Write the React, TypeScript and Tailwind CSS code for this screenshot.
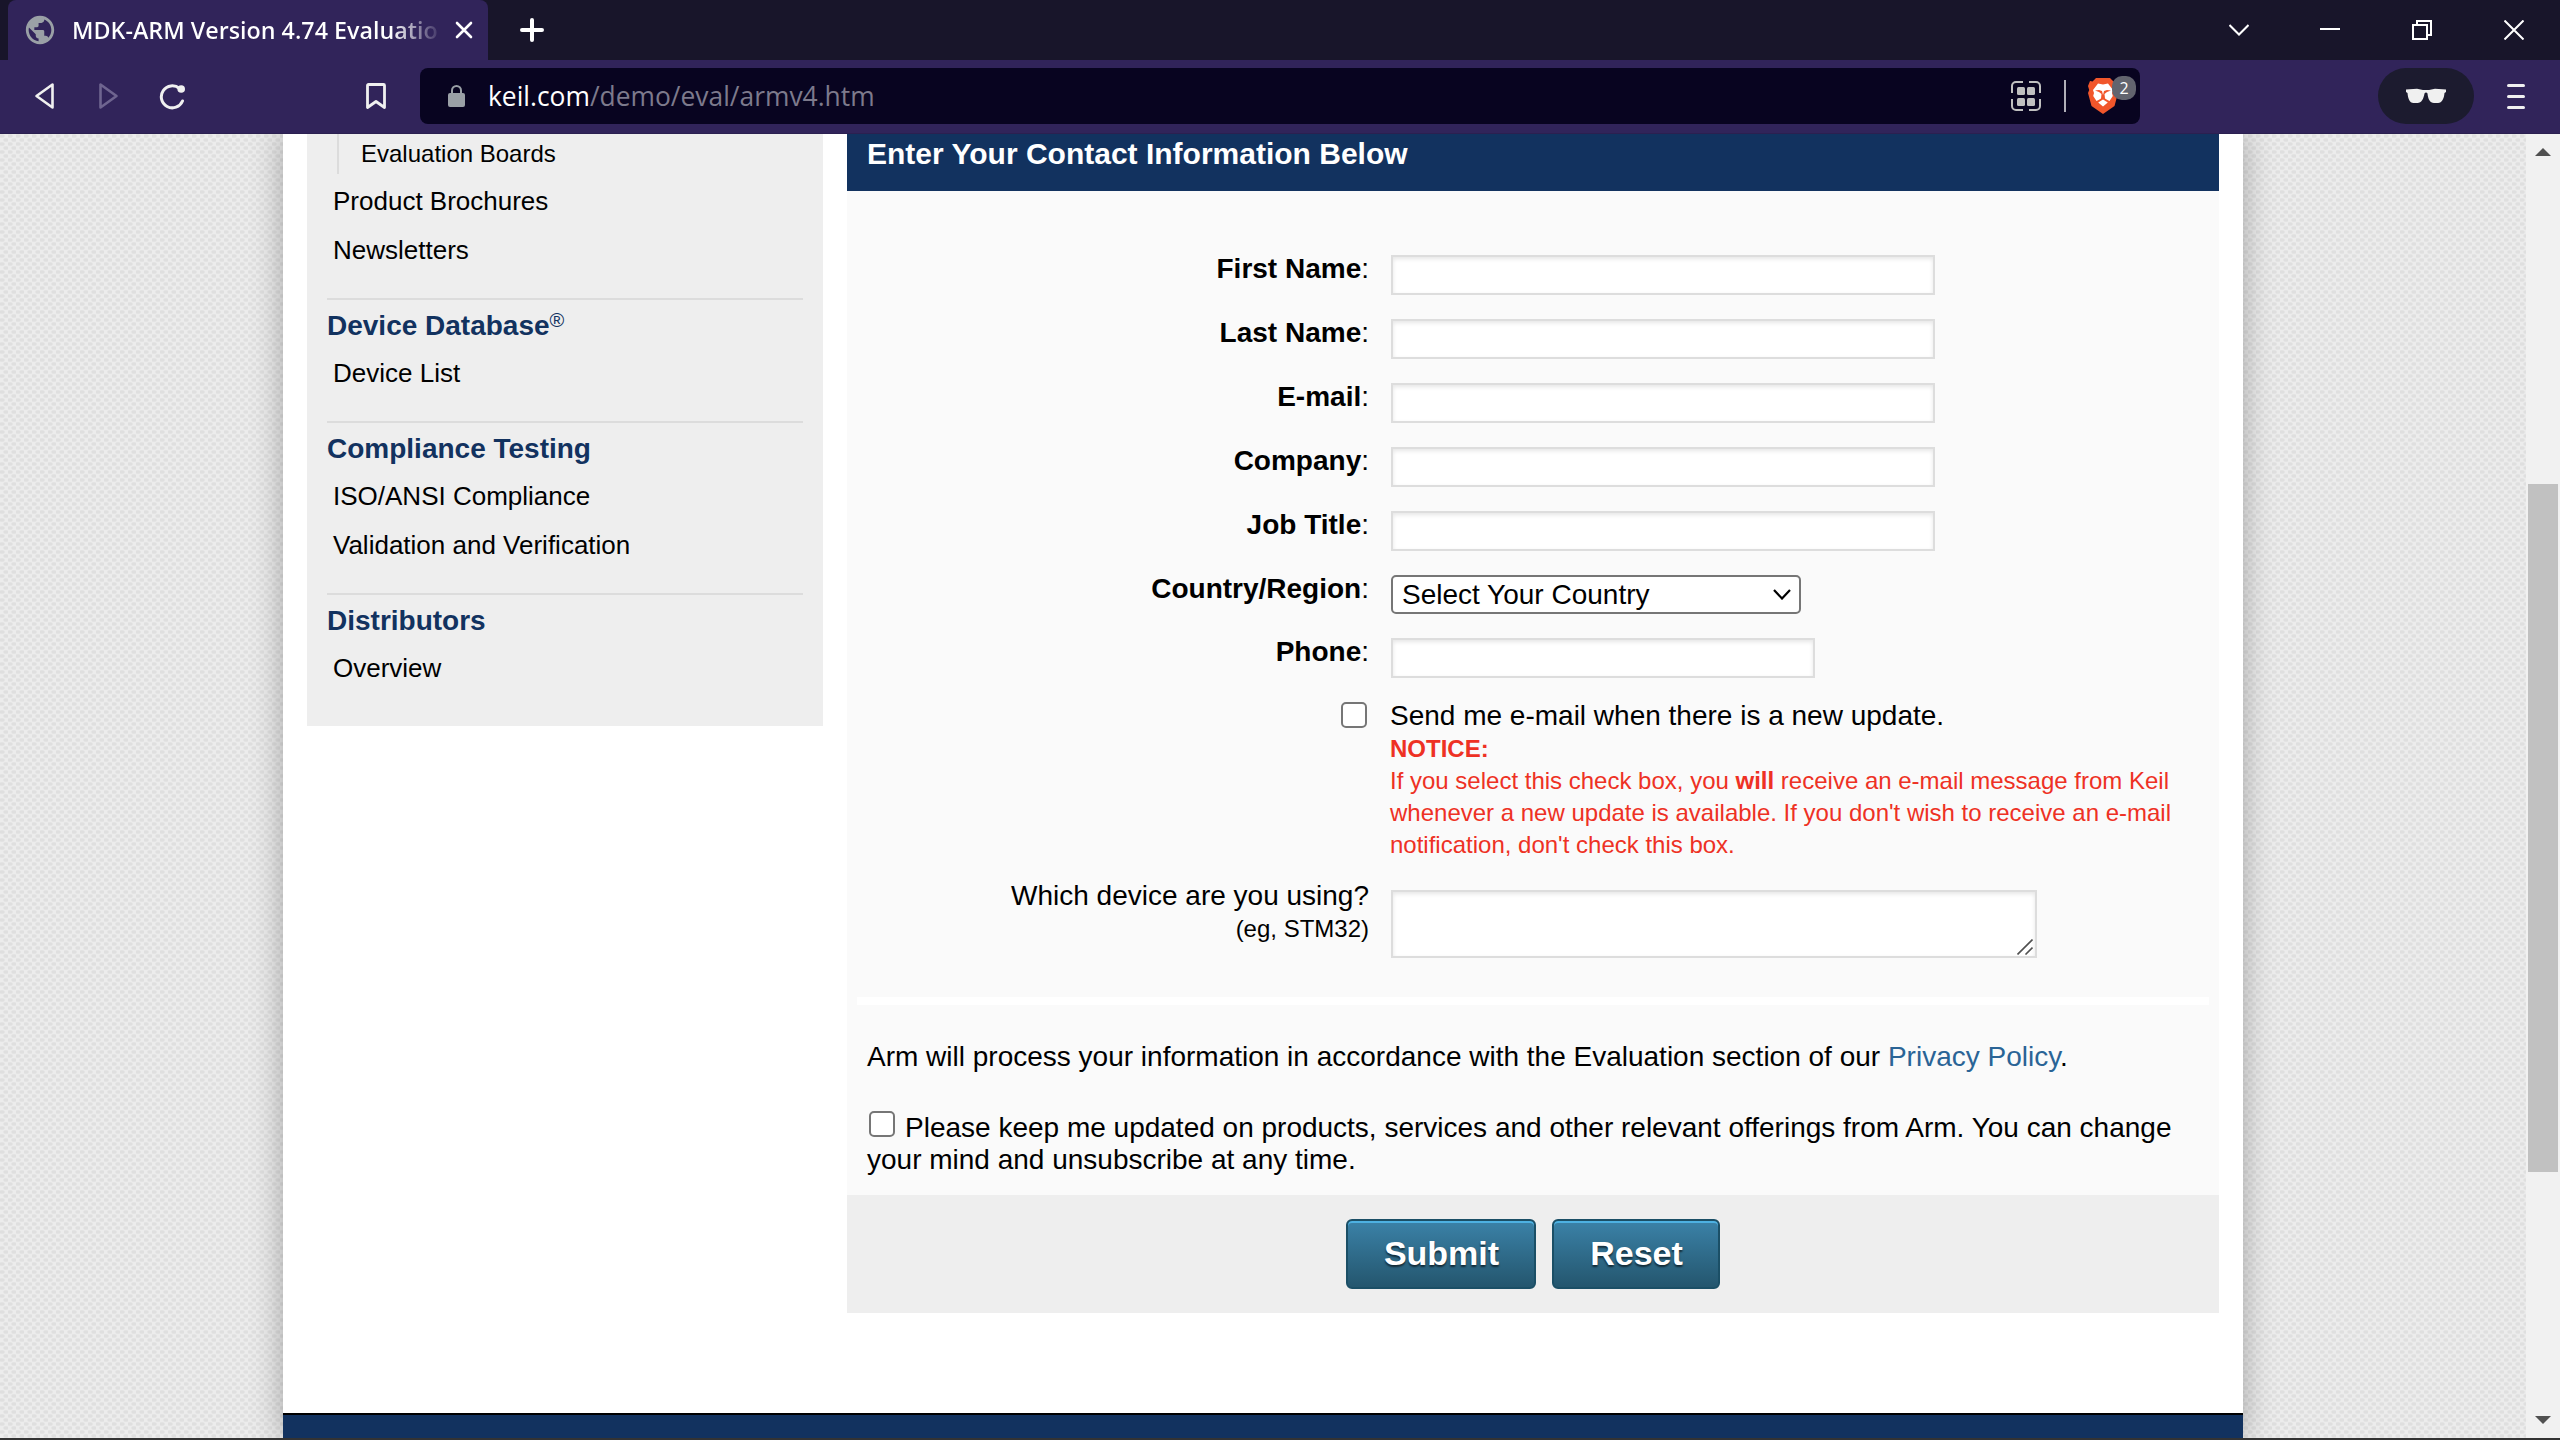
import type { ReactNode } from "react";
import { MdPublic } from "react-icons/md";

const stroke = { fill: "none", stroke: "currentColor" } as const;

function TabStrip() {
  return (
    <div className="flex h-[60px] items-stretch bg-[#18152a] text-white">
      <div className="ml-2 flex w-[480px] items-center rounded-t-lg bg-[#31245a]">
        <MdPublic className="ml-[15px] h-[34px] w-[34px] shrink-0 text-[#9aa0a6]" />
        <div className="ml-[15px] w-[371px] overflow-hidden whitespace-nowrap bg-gradient-to-r from-white from-86% to-transparent bg-clip-text font-['Open_Sans','Noto_Sans',sans-serif] text-[23.3px] font-semibold text-transparent">
          MDK-ARM Version 4.74 Evaluatio
        </div>
        <svg className="ml-[12px] h-[18px] w-[18px] shrink-0" viewBox="0 0 18 18" {...stroke} strokeWidth="2.6" strokeLinecap="round">
          <path d="M2 2 16 16M16 2 2 16" />
        </svg>
      </div>
      <svg className="my-auto ml-8 h-6 w-6" viewBox="0 0 24 24" {...stroke} strokeWidth="4" strokeLinecap="round">
        <path d="M12 2v20M2 12h20" />
      </svg>
      <div className="ml-auto flex items-center gap-[72px] pr-[36px]">
        <svg className="-mr-px h-5 w-5" viewBox="0 0 20 20" {...stroke} strokeWidth="2">
          <path d="M0.5 5 10 14.500l9.500-9.500" />
        </svg>
        <svg className="h-5 w-5" viewBox="0 0 20 20" {...stroke} strokeWidth="2">
          <path d="M0 9h20" />
        </svg>
        <svg className="h-5 w-5" viewBox="0 0 20 20" {...stroke} strokeWidth="2">
          <path d="M1 5h14v14H1zM5 4.500V1h14v14h-3.500" />
        </svg>
        <svg className="h-5 w-5" viewBox="0 0 20 20" {...stroke} strokeWidth="2">
          <path d="M0.500 0.500 19.500 19.500M19.500 0.500 0.500 19.500" />
        </svg>
      </div>
    </div>
  );
}

function BraveIcon() {
  return (
    <svg className="h-9 w-[30px]" viewBox="0 0 30 36">
      <path fill="#f1562b" d="M8 0h14l3.500 3.500 2.500-.5 2 5-1.200 4L30 15l-3.500 13L15 36 3.500 28 0 15l1.200-3L0 8l2-5 2.500.5z" />
      <path
        fill="#fff"
        d="M10 5.500l5 1 5-1 5 6.500-1 3 .800 3-3.300 5-2.500-1.300-2-1.200-.5-4.500 2.500-2 4-1.500-4-.5-3 1L15 17l-1-4-3-1-4 .5 4 1.500 2.500 2-.5 4.500-2 1.200L8.500 23l-3.300-5 .8-3-1-3z"
      />
      <path fill="#fff" d="M15 21.500l4.800 3L15 28.500l-4.800-4z" />
    </svg>
  );
}

function Toolbar() {
  return (
    <div className="flex h-[74px] items-start border-b border-[#2b2050] bg-[#31245a] pt-2 text-[#f0f0f0]">
      <div className="flex h-14 w-[420px] shrink-0 items-center">
        <svg className="ml-[34px] h-[28px] w-[21px]" viewBox="0 0 21 28" {...stroke} strokeWidth="2.600" strokeLinejoin="round">
          <path d="M18.500 2.500v23L2.500 14z" />
        </svg>
        <svg className="ml-[43px] h-[28px] w-[21px] text-[#6f6590]" viewBox="0 0 21 28" {...stroke} strokeWidth="2.600" strokeLinejoin="round">
          <path d="M2.500 2.500v23L18.500 14z" />
        </svg>
        <svg className="ml-[38px] h-[28px] w-[30px]" viewBox="0 0 30 28" {...stroke} strokeWidth="3" strokeLinecap="round">
          <path d="M22.500 6.500A11 11 0 1 0 25.500 19" />
          <circle cx="24.200" cy="7" r="3.800" fill="currentColor" stroke="none" />
        </svg>
        <svg className="ml-[178px] h-[28px] w-[22px]" viewBox="0 0 22 28" {...stroke} strokeWidth="2.800" strokeLinejoin="round">
          <path d="M2.500 3.500a1 1 0 0 1 1-1h15a1 1 0 0 1 1 1v22L11 19.500 2.500 25.500z" />
        </svg>
      </div>
      <div className="flex h-14 w-[1720px] items-center rounded-lg bg-[#080420]">
        <svg className="ml-[28px] h-[22px] w-[17px]" viewBox="0 0 17 22">
          <rect y="8" width="17" height="14" rx="2" fill="#9aa0a6" />
          <path d="M4 9V5.500a4.500 4.500 0 0 1 9 0V9" fill="none" stroke="#9aa0a6" strokeWidth="2" />
        </svg>
        <div className="ml-[23px] whitespace-nowrap font-['Open_Sans','Noto_Sans',sans-serif] text-[26.4px] leading-8 text-[#7d7a8c]">
          <span className="text-white">keil.com</span>/demo/eval/armv4.htm
        </div>
        <svg className="ml-auto h-[30px] w-[30px] text-[#c0c0c0]" viewBox="0 0 30 30">
          <path {...stroke} strokeWidth="2" d="M1 12V5a4 4 0 0 1 4-4h7M18 1h7a4 4 0 0 1 4 4v7M29 18v7a4 4 0 0 1-4 4h-7M12 29H5a4 4 0 0 1-4-4v-7" />
          <g fill="currentColor">
            <rect x="6" y="6" width="8" height="8" rx="1.500" />
            <rect x="16" y="6" width="8" height="8" rx="1.500" />
            <rect x="6" y="17" width="8" height="8" rx="1.500" />
            <rect x="16" y="17" width="8" height="8" rx="1.500" />
          </g>
        </svg>
        <div className="ml-[23px] h-8 w-[2px] bg-[#b0afb8]" />
        <div className="relative mr-[22px] ml-[22px]">
          <BraveIcon />
          <div className="absolute -top-[2px] left-6 flex h-6 w-6 items-center justify-center rounded-[10px] bg-[#62646e] font-['Open_Sans',sans-serif] text-[16px] leading-none text-white">
            2
          </div>
        </div>
      </div>
      <div className="ml-auto flex h-14 items-center">
        <div className="flex h-14 w-24 items-center justify-center rounded-full bg-[#1c1b2f]">
          <svg className="h-4 w-10" viewBox="0 0 40 16" fill="#f0f0f0">
            <path d="M0 1.500 11 .8l6 1.200h6l6-1.200 11 .7v2.500l-1.500 1c-.5 5.500-2.500 10-6.500 10h-4c-4 0-6-4-6.500-9.500-.8-1.300-2.200-1.300-3 0C17.500 11 15.500 15 11.500 15h-4C3.500 15 2 10.500 1.500 5L0 4z" />
          </svg>
        </div>
        <div className="mr-[35px] ml-[33px] flex w-[18px] flex-col gap-2">
          <div className="h-[3px] rounded-full bg-[#f0f0f0]" />
          <div className="h-[3px] rounded-full bg-[#f0f0f0]" />
          <div className="h-[3px] rounded-full bg-[#f0f0f0]" />
        </div>
      </div>
    </div>
  );
}

function SideSection({ title, items }: { title: ReactNode; items: string[] }) {
  return (
    <section className="border-t-2 border-[#dcdcdc] pt-[10px] pb-[15px]">
      <h3 className="h-[47px] text-[28px] leading-8 font-bold text-[#12325f]">{title}</h3>
      <ul className="ml-[6px] text-[26px]">
        {items.map((item) => (
          <li key={item} className="h-[49px] leading-8">
            {item}
          </li>
        ))}
      </ul>
    </section>
  );
}

function Sidebar() {
  return (
    <nav className="ml-6 h-[592px] w-[516px] bg-[#eeeeee] px-5">
      <div className="ml-[10px] h-10 border-l-2 border-[#dcdcdc] pt-1 pl-[22px] text-[24px] leading-8">Evaluation Boards</div>
      <ul className="mt-[11px] mb-[15px] ml-[6px] h-[98px] text-[26px] leading-8">
        <li className="h-[49px]">Product Brochures</li>
        <li className="h-[49px]">Newsletters</li>
      </ul>
      <SideSection
        title={
          <>
            Device Database<sup className="-top-[8px] text-[20px] leading-none font-normal">®</sup>
          </>
        }
        items={["Device List"]}
      />
      <SideSection title="Compliance Testing" items={["ISO/ANSI Compliance", "Validation and Verification"]} />
      <SideSection title="Distributors" items={["Overview"]} />
    </nav>
  );
}

const field = "block rounded-none border-2 border-[#dddddd] bg-white shadow-[inset_0_2px_4px_rgba(0,0,0,0.1)] outline-none";
const checkbox = "h-[26px] w-[26px] appearance-none rounded-[5px] border-2 border-[#767676] bg-white";

function Row({ label, className, children }: { label: ReactNode; className: string; children: ReactNode }) {
  return (
    <div className={"flex " + className}>
      <div className="mr-[22px] w-[522px] shrink-0 pt-px text-right">{label}</div>
      <div className="pt-[3px]">{children}</div>
    </div>
  );
}

function FieldLabel({ children }: { children: string }) {
  return (
    <>
      <b>{children}</b>:
    </>
  );
}

function ContactForm() {
  return (
    <form className="ml-6 w-[1372px] text-[28px] leading-8">
      <h2 className="h-[57px] bg-[#12325f] pt-[4px] pl-5 text-[30px] leading-8 font-bold text-white">
        Enter Your Contact Information Below
      </h2>
      <div className="h-[1004px] bg-[#fafafa] pt-[61px]">
        {["First Name", "Last Name", "E-mail", "Company", "Job Title"].map((name) => (
          <Row key={name} className="h-16" label={<FieldLabel>{name}</FieldLabel>}>
            <input className={field + " h-10 w-[544px]"} />
          </Row>
        ))}
        <Row className="h-[63px]" label={<FieldLabel>Country/Region</FieldLabel>}>
          <div className="relative">
            <select className="block h-[39px] w-[410px] appearance-none rounded-[5px] border-2 border-[#767676] bg-white py-0 pl-[9px] leading-8 text-black">
              <option>Select Your Country</option>
            </select>
            <svg className="absolute top-[14px] right-[10px] h-[11px] w-[18px]" viewBox="0 0 18 11" fill="none" stroke="#000" strokeWidth="2.200">
              <path d="M1 1l8 8.500L17 1" />
            </svg>
          </div>
        </Row>
        <Row className="h-16" label={<FieldLabel>Phone</FieldLabel>}>
          <input className={field + " h-10 w-[424px]"} />
        </Row>
        <Row className="h-[180px]" label={<input type="checkbox" className={checkbox + " mt-[2px] mr-[2px]"} />}>
          <div className="-mt-[3px] -ml-px w-[800px]">
            <div className="h-[34px] pt-px">Send me e-mail when there is a new update.</div>
            <div className="text-[24px] leading-8 text-[#ee3124]">
              <b>NOTICE:</b>
              <br />
              If you select this check box, you <b>will</b> receive an e-mail message from Keil
              <br />
              whenever a new update is available. If you don't wish to receive an e-mail
              <br />
              notification, don't check this box.
            </div>
          </div>
        </Row>
        <Row
          className="h-[118px]"
          label={
            <>
              <div className="h-[33px]">Which device are you using?</div>
              <div className="text-[24px] leading-8">(eg, STM32)</div>
            </>
          }
        >
          <div className="relative mt-2">
            <textarea className={field + " h-[68px] w-[646px] resize-none"} />
            <svg className="absolute right-[4px] bottom-[3px] h-4 w-4" viewBox="0 0 16 16" fill="none" stroke="#505050" strokeWidth="1.600">
              <path d="M0.500 15.500 15.500 .5M8.500 15.500 15.500 8.500" />
            </svg>
          </div>
        </Row>
        <div className="mx-[10px] h-2 bg-white" />
        <p className="mt-[36px] pl-5">
          Arm will process your information in accordance with the Evaluation section of our{" "}
          <a className="text-[#2a6496]">Privacy Policy</a>.
        </p>
        <p className="mt-[38px] pl-5 whitespace-nowrap">
          <input type="checkbox" className={checkbox + " mr-[10px] ml-[2px] align-[0px]"} />
          Please keep me updated on products, services and other relevant offerings from Arm. You can change
          <br />
          your mind and unsubscribe at any time.
        </p>
      </div>
      <div className="flex h-[118px] items-center justify-center gap-4 bg-[#eeeeee]">
        <FormButton className="w-[190px]">Submit</FormButton>
        <FormButton className="w-[168px]">Reset</FormButton>
      </div>
    </form>
  );
}

function FormButton({ className, children }: { className: string; children: string }) {
  return (
    <button
      type="button"
      className={
        "h-[70px] rounded-md border-2 border-[#1b4f66] bg-gradient-to-b from-[#3b82a8] to-[#24566e] pb-[3px] pl-px text-[34px] leading-8 font-bold text-white shadow-[inset_0_2px_0_#4db1e2] [text-shadow:0_2px_2px_rgba(0,0,0,0.6)] " +
        className
      }
    >
      {children}
    </button>
  );
}

function Scrollbar() {
  return (
    <div className="flex w-[34px] flex-col items-center bg-[#f1f1f1]">
      <div className="mt-[14px] border-x-8 border-b-8 border-x-transparent border-b-[#505050]" />
      <div className="mt-[328px] h-[688px] w-[30px] bg-[#c1c1c1]" />
      <div className="mt-auto mb-[14px] border-x-8 border-t-8 border-x-transparent border-t-[#505050]" />
    </div>
  );
}

export default function App() {
  return (
    <div className="flex h-[1440px] w-[2560px] flex-col overflow-hidden bg-[#333333] font-['Liberation_Sans',Arial,sans-serif] text-black">
      <TabStrip />
      <Toolbar />
      <div className="flex h-[1304px] overflow-hidden">
        <div className="flex grow justify-center overflow-hidden bg-[#ececec] bg-[radial-gradient(ellipse_3.5px_2.5px_at_2px_2px,#dfdfdf_50%,transparent),radial-gradient(ellipse_3.5px_2.5px_at_6px_6px,#dfdfdf_50%,transparent)] bg-[length:8px_8px]">
          <main className="flex w-[1960px] flex-col bg-white shadow-[0_0_30px_rgba(0,0,0,0.3)]">
            <div className="flex h-[1279px] items-start">
              <Sidebar />
              <ContactForm />
            </div>
            <div className="grow border-t-2 border-black bg-[#12325f]" />
          </main>
        </div>
        <Scrollbar />
      </div>
    </div>
  );
}
